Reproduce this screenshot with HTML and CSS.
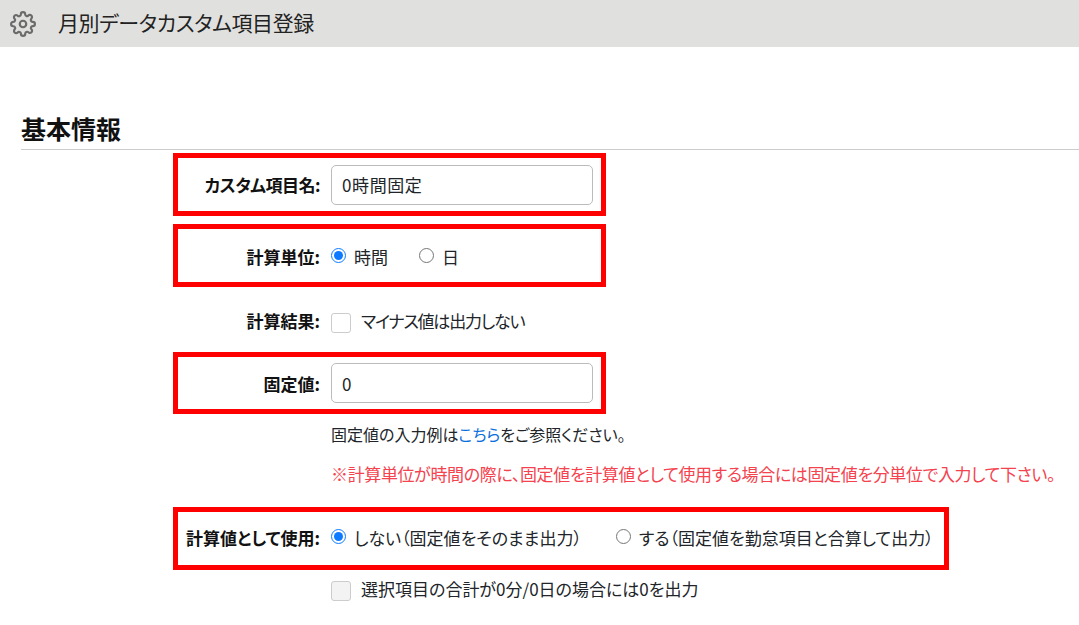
FILE: index.html
```html
<!DOCTYPE html>
<html lang="ja">
<head>
<meta charset="utf-8">
<title>月別データカスタム項目登録</title>
<link rel="stylesheet" href="styles.css">
</head>
<body>
<header class="topbar">
  <svg class="gear" viewBox="0 0 24 24" width="26" height="26" fill="none" stroke="#6b6b6b" stroke-width="2" stroke-linecap="round" stroke-linejoin="round">
    <circle cx="12" cy="12" r="3"/>
    <path d="M19.4 15a1.65 1.65 0 0 0 .33 1.82l.06.06a2 2 0 0 1 0 2.83 2 2 0 0 1-2.83 0l-.06-.06a1.65 1.65 0 0 0-1.82-.33 1.65 1.65 0 0 0-1 1.51V21a2 2 0 0 1-2 2 2 2 0 0 1-2-2v-.09A1.65 1.65 0 0 0 9 19.4a1.65 1.65 0 0 0-1.82.33l-.06.06a2 2 0 0 1-2.83 0 2 2 0 0 1 0-2.83l.06-.06a1.65 1.65 0 0 0 .33-1.82 1.65 1.65 0 0 0-1.51-1H3a2 2 0 0 1-2-2 2 2 0 0 1 2-2h.09A1.65 1.65 0 0 0 4.6 9a1.65 1.65 0 0 0-.33-1.82l-.06-.06a2 2 0 0 1 0-2.83 2 2 0 0 1 2.83 0l.06.06a1.65 1.65 0 0 0 1.82.33H9a1.65 1.65 0 0 0 1-1.51V3a2 2 0 0 1 2-2 2 2 0 0 1 2 2v.09a1.65 1.65 0 0 0 1 1.51 1.65 1.65 0 0 0 1.82-.33l.06-.06a2 2 0 0 1 2.83 0 2 2 0 0 1 0 2.83l-.06.06a1.65 1.65 0 0 0-.33 1.82V9a1.65 1.65 0 0 0 1.51 1H21a2 2 0 0 1 2 2 2 2 0 0 1-2 2h-.09a1.65 1.65 0 0 0-1.51 1z"/>
  </svg>
  <h1 class="title">月別データカスタム項目登録</h1>
</header>

<main class="content">
  <h2 class="section-title">基本情報</h2>
  <form class="form">
    <div class="row marked">
      <label class="label label-kana">カスタム項目名:</label>
      <input class="field" type="text" value="0時間固定">
    </div>
    <div class="row marked row-unit">
      <span class="label">計算単位:</span>
      <label class="choice choice-unit"><input class="radio" type="radio" name="unit" checked>時間</label>
      <label class="choice"><input class="radio" type="radio" name="unit">日</label>
    </div>
    <div class="row row-result">
      <span class="label">計算結果:</span>
      <label class="check check-minus"><input class="box" type="checkbox">マイナス値は出力しない</label>
    </div>
    <div class="row marked row-fixed">
      <label class="label">固定値:</label>
      <input class="field" type="text" value="0">
    </div>
    <p class="help">固定値の入力例は<a class="link" href="#">こちら</a>をご参照ください。</p>
    <p class="warning">※計算単位が時間の際に、固定値を計算値として使用する場合には固定値を分単位で入力して下さい。</p>
    <div class="row marked row-wide">
      <span class="label">計算値として使用:</span>
      <label class="choice choice-use"><input class="radio" type="radio" name="use" checked>しない（固定値をそのまま出力）</label>
      <label class="choice"><input class="radio" type="radio" name="use">する（固定値を勤怠項目と合算して出力）</label>
    </div>
    <label class="check check-last"><input class="box" type="checkbox" disabled>選択項目の合計が0分/0日の場合には0を出力</label>
  </form>
</main>
</body>
</html>
```

FILE: styles.css
```css
* { box-sizing: border-box; }
html, body { margin: 0; padding: 0; }
body {
  background: #fff;
  color: #212529;
  font-family: "Noto Sans CJK JP", "Noto Sans", sans-serif;
  font-size: 17px;
  font-feature-settings: "palt";
  overflow: hidden;
  height: 625px;
}
.topbar {
  display: flex;
  align-items: center;
  height: 47px;
  background: #e0e0de;
  padding-left: 10px;
}
.gear { flex: none; }
.title {
  margin: 0 0 2px 22px;
  font-size: 21px;
  font-weight: 400;
  line-height: 1;
  letter-spacing: -0.4px;
  color: #222;
}
.content { padding-left: 21px; }
.section-title {
  margin: 0;
  height: 103px;
  padding-top: 66px;
  border-bottom: 1px solid #ccc;
  font-size: 25px;
  font-weight: 700;
  line-height: 30px;
  color: #111;
}
.form {
  display: flex;
  flex-direction: column;
  align-items: flex-start;
  padding: 3px 0 0 152px;
}
.row {
  display: flex;
  align-items: center;
  width: 433px;
  height: 63px;
  border: 5px solid transparent;
}
.marked { border-color: #f00; }
.row-unit { margin-top: 8px; padding-top: 2px; }
.row-result { height: 65px; padding-top: 2px; }
.row-fixed { height: 62px; }
.row-wide { width: 776px; margin-top: 21px; padding-bottom: 2px; }
.label {
  flex: none;
  width: 142px;
  margin-right: 11px;
  text-align: right;
  font-weight: 700;
  color: #111;
}
.label-kana { letter-spacing: -0.5px; }
.field {
  width: 262px;
  height: 40px;
  padding: 0 10px;
  border: 1px solid #bbb;
  border-radius: 5px;
  font: inherit;
  letter-spacing: 0.6px;
  color: #212529;
}
.choice, .check {
  display: flex;
  align-items: center;
  line-height: 24px;
}
.radio {
  width: 15px;
  height: 15px;
  margin: 0 8px 3px 0;
  accent-color: #0d7bff;
}
.choice-unit { margin-right: 31px; }
.choice-use { margin-right: 34px; }
.box {
  appearance: none;
  width: 20px;
  height: 20px;
  margin: 4px 10px 0 0;
  border: 1px solid #ccc;
  border-radius: 3px;
  background: #fff;
}
.box:disabled { background: #f3f3f3; }
.check-minus { letter-spacing: -1.2px; }
.help {
  margin: 8px 0 0 158px;
  font-size: 16px;
  line-height: 24px;
}
.link { color: #0a6fdc; text-decoration: none; }
.warning {
  margin: 16px 0 0 158px;
  line-height: 24px;
  letter-spacing: -0.37px;
  color: #f4434f;
  white-space: nowrap;
}
.check-last { margin: 7px 0 0 158px; }
```
